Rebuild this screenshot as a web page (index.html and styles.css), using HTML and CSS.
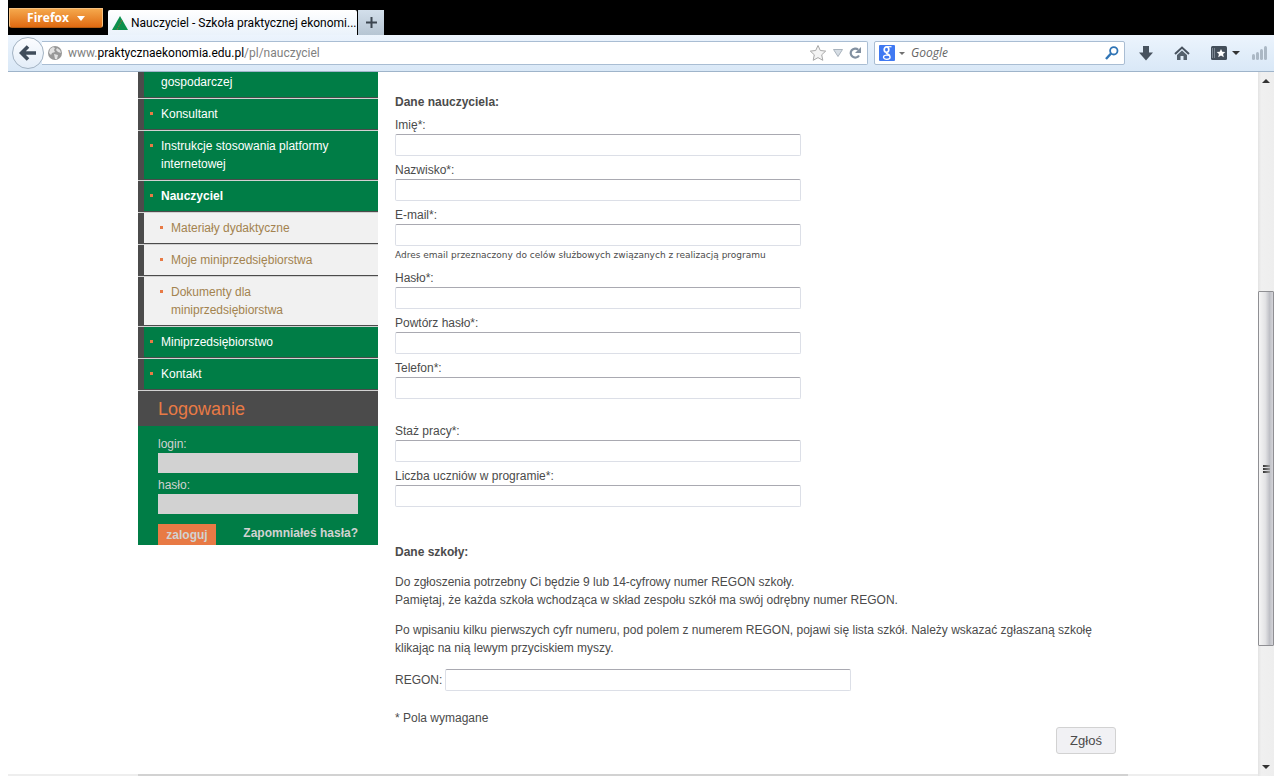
FILE: index.html
```html
<!DOCTYPE html>
<html lang="pl">
<head>
<meta charset="utf-8">
<title>Nauczyciel - Szkoła praktycznej ekonomii</title>
<link rel="stylesheet" href="styles.css">
</head>
<body>
<div class="window">
  <header class="titlebar">
    <button class="firefox" type="button">Firefox <span class="caret-white"></span></button>
    <div class="tab">
      <svg class="tab-icon" viewBox="0 0 16 14" aria-hidden="true"><path d="M8 0l8 14H0z" fill="#0b8f4c"/><path d="M10 4L5 14" stroke="#8a6a3c" stroke-width="1" stroke-dasharray="2 1"/></svg>
      <span class="tab-title">Nauczyciel - Szkoła praktycznej ekonomi...</span>
    </div>
    <button class="new-tab" type="button" aria-label="Nowa karta"><svg viewBox="0 0 11 11" width="11" height="11"><path d="M5.500 0v11M0 5.500h11" stroke="#3c4650" stroke-width="2"/></svg></button>
  </header>
  <div class="toolbar">
    <button class="back" type="button" aria-label="Wstecz"><svg viewBox="0 0 18 16" width="18" height="16"><path d="M9 1.500L2.500 8L9 14.500M3 8h14" fill="none" stroke="#3f4c5a" stroke-width="3.600"/></svg></button>
    <div class="address">
      <svg viewBox="0 0 14 14" width="14" height="14" aria-hidden="true"><circle cx="7" cy="7" r="7" fill="#989898"/><path d="M2 3l3-2 2 1-1 2 1 2-3 1-1 2-2-2zM9 2l3 2 1 3-3-1-2-2zM6 8l4 1-1 4-2 0z" fill="#e2e2e2"/></svg>
      <div class="url">www.<b>praktycznaekonomia.edu.pl</b>/pl/nauczyciel</div>
      <svg viewBox="0 0 18 18" width="18" height="18" aria-hidden="true"><path d="M9 1.500l2.300 5 5.400.6-4 3.700 1.100 5.500L9 13.600l-4.800 2.700 1.100-5.500-4-3.700 5.400-.6z" fill="#f4f4f4" stroke="#a8a8a8"/></svg>
      <svg viewBox="0 0 10 8" width="10" height="8" aria-hidden="true"><path d="M.5.5h9L5 7.500z" fill="#d6dde4" stroke="#a9b3bd"/></svg>
      <svg viewBox="0 0 12 12" width="12" height="12" aria-hidden="true"><path d="M9.200 2.700A4.500 4.500 0 1 0 10 8.500" fill="none" stroke="#8290a0" stroke-width="2.200"/><path d="M12 0v6H6z" fill="#8290a0"/></svg>
    </div>
    <div class="search">
      <svg viewBox="0 0 16 16" width="16" height="16" aria-hidden="true"><rect width="16" height="16" rx="1" fill="#4079f2"/><g fill="none" stroke="#fff"><ellipse cx="7.500" cy="4.600" rx="2.300" ry="2.700" stroke-width="1.700"/><path d="M8 7.500c-2 1.200 2 1.400 2.800 3.200" stroke-width="1.600"/><ellipse cx="7.800" cy="12.300" rx="3.300" ry="2.100" stroke-width="1.300"/><path d="M8 1.700h4.500" stroke-width="1.200"/></g></svg>
      <span class="caret-gray"></span>
      <input class="search-input" type="text" placeholder="Google" aria-label="Szukaj">
      <svg viewBox="0 0 14 14" width="14" height="14" aria-hidden="true"><circle cx="8.800" cy="4.800" r="3.700" fill="none" stroke="#2f74b5" stroke-width="1.800"/><path d="M6 7.500L1 13" stroke="#2f74b5" stroke-width="2.400"/></svg>
    </div>
    <div class="tools">
      <svg viewBox="0 0 14 15" width="14" height="15" aria-hidden="true"><path d="M4 0h6v6.500h4L7 14.500 0 6.500h4z" fill="#48535f"/></svg>
      <svg viewBox="0 0 16 14" width="16" height="14" aria-hidden="true"><path d="M1 8l7-6.500L15 8" fill="none" stroke="#48535f" stroke-width="2"/><path d="M3 9l5-4.500L13 9v5H9.500v-4h-3v4H3z" fill="#55616d"/></svg>
      <span class="bookmarks">
        <svg viewBox="0 0 16 14" width="16" height="14" aria-hidden="true"><rect width="16" height="14" rx="1.500" fill="#434e5a"/><path d="M1.500 2v10M3.500 2v10" stroke="#7c8792"/><path d="M10 3l1.300 2.800 3 .3-2.200 2 .7 3.100L10 9.600l-2.800 1.600.7-3.100-2.200-2 3-.3z" fill="#fff"/></svg>
        <span class="caret-dark"></span>
      </span>
      <svg viewBox="0 0 15 14" width="15" height="14" aria-hidden="true"><g fill="#abb8c5"><rect y="8" width="3" height="6" rx="1.500"/><rect x="4" y="6" width="3" height="8" rx="1.500"/><rect x="8" y="3" width="3" height="11" rx="1.500"/><rect x="12" width="3" height="14" rx="1.500"/></g></svg>
    </div>
  </div>
  <div class="viewport">
    <div class="page">
      <div class="container">
        <aside class="sidebar">
          <nav>
            <ul class="menu">
              <li class="menu-item continued"><a href="#">gospodarczej</a></li>
              <li class="menu-item"><a href="#">Konsultant</a></li>
              <li class="menu-item"><a href="#">Instrukcje stosowania platformy internetowej</a></li>
              <li class="menu-item active"><a href="#">Nauczyciel</a></li>
              <li class="menu-item sub"><a href="#">Materiały dydaktyczne</a></li>
              <li class="menu-item sub"><a href="#">Moje miniprzedsiębiorstwa</a></li>
              <li class="menu-item sub"><a href="#">Dokumenty dla miniprzedsiębiorstwa</a></li>
              <li class="menu-item"><a href="#">Miniprzedsiębiorstwo</a></li>
              <li class="menu-item"><a href="#">Kontakt</a></li>
            </ul>
          </nav>
          <h2 class="login-title">Logowanie</h2>
          <form class="login">
            <label for="login">login:</label>
            <input id="login" type="text">
            <label for="pass">hasło:</label>
            <input id="pass" type="password">
            <div class="login-actions">
              <button type="button">zaloguj</button>
              <a href="#">Zapomniałeś hasła?</a>
            </div>
          </form>
        </aside>
        <main class="content">
          <form>
            <h3 class="heading">Dane nauczyciela:</h3>
            <div class="fields">
              <div class="field"><label for="imie">Imię*:</label><input id="imie" type="text"></div>
              <div class="field"><label for="nazwisko">Nazwisko*:</label><input id="nazwisko" type="text"></div>
              <div class="field"><label for="email">E-mail*:</label><input id="email" type="text"><small class="hint">Adres email przeznaczony do celów służbowych związanych z realizacją programu</small></div>
              <div class="field"><label for="haslo">Hasło*:</label><input id="haslo" type="password"></div>
              <div class="field"><label for="haslo2">Powtórz hasło*:</label><input id="haslo2" type="password"></div>
              <div class="field"><label for="telefon">Telefon*:</label><input id="telefon" type="text"></div>
              <div class="field spaced"><label for="staz">Staż pracy*:</label><input id="staz" type="text"></div>
              <div class="field"><label for="liczba">Liczba uczniów w programie*:</label><input id="liczba" type="text"></div>
            </div>
            <h3 class="heading school">Dane szkoły:</h3>
            <p>Do zgłoszenia potrzebny Ci będzie 9 lub 14-cyfrowy numer REGON szkoły.<br>Pamiętaj, że każda szkoła wchodząca w skład zespołu szkół ma swój odrębny numer REGON.</p>
            <p>Po wpisaniu kilku pierwszych cyfr numeru, pod polem z numerem REGON, pojawi się lista szkół. Należy wskazać zgłaszaną szkołę klikając na nią lewym przyciskiem myszy.</p>
            <div class="regon"><label for="regon">REGON:</label><input id="regon" type="text"></div>
            <div class="required">* Pola wymagane</div>
            <div class="submit-row"><button class="submit" type="button">Zgłoś</button></div>
          </form>
        </main>
      </div>
      <footer class="footer"><div class="footer-line"></div></footer>
    </div>
    <div class="scrollbar" aria-hidden="true">
      <span class="arrow up"></span>
      <div class="track">
        <div class="before"></div>
        <div class="thumb"><i></i><i></i><i></i></div>
        <div class="after"></div>
      </div>
      <span class="arrow down"></span>
    </div>
  </div>
</div>
</body>
</html>
```

FILE: styles.css
```css
* { box-sizing: border-box; }
body { margin: 0; background: #fff; color: #4b4b4b; font: 12px/18px "Liberation Sans", Arial, sans-serif; }
button, input { font: inherit; color: inherit; margin: 0; }
a { color: inherit; text-decoration: none; }
svg { display: block; flex: none; }

.window { margin: 0 8px; }

/* browser chrome */
.titlebar { display: flex; align-items: flex-end; height: 35px; background: #000; font-family: "Open Sans", "Noto Sans", sans-serif; }
.firefox { align-self: flex-start; display: flex; align-items: center; justify-content: center; gap: 8px; width: 94px; height: 20px; margin: 8px 5px 0 1px; padding: 0; border: 1px solid #f6c180; border-bottom-color: #b45a10; border-radius: 0 0 3px 3px; background: linear-gradient(#f5a84c, #df6a12); color: #fff; font-weight: 700; line-height: 16px; }
.caret-white { border: 4px solid transparent; border-top: 5px solid #fff; border-bottom: 0; }
.tab { display: flex; align-items: center; gap: 3px; width: 249px; height: 25px; padding-left: 4px; background: linear-gradient(#fff, #eaf2fb); color: #000; border-radius: 2px 2px 0 0; }
.tab-icon { width: 16px; height: 14px; }
.tab-title { font-family: Roboto, sans-serif; white-space: nowrap; }
.new-tab { display: flex; align-items: center; justify-content: center; width: 26px; height: 25px; margin-left: 1px; padding: 0; border: 0; background: linear-gradient(#d3dfeb, #b6c5d3); }

.toolbar { display: flex; align-items: center; height: 37px; padding: 0 8px 0 4px; background: linear-gradient(#ecf4fd, #d9e8f7); border-bottom: 1px solid #9fb4ca; font-family: "Open Sans", "Noto Sans", sans-serif; }
.back { z-index: 1; display: flex; align-items: center; justify-content: center; width: 32px; height: 32px; padding: 0; border: 1px solid #a3b3c3; border-radius: 50%; background: linear-gradient(#fcfdff, #e3edf8); }
.address { display: flex; align-items: center; gap: 6px; flex: 1; height: 24px; margin-left: -2px; padding: 0 6px; border: 1px solid #a9bdd3; border-left: 0; border-radius: 0 2px 2px 0; background: #fff; }
.url { flex: 1; color: #808080; font-family: Roboto, sans-serif; white-space: nowrap; }
.url b { color: #000; font-weight: 400; }
.search { display: flex; align-items: center; gap: 4px; width: 251px; height: 24px; margin-left: 6px; padding: 0 5px 0 4px; border: 1px solid #a9bdd3; border-radius: 2px; background: #fff; }
.caret-gray { border: 3px solid transparent; border-top-color: #707070; border-bottom: 0; }
.search-input { flex: 1; min-width: 0; padding: 0 2px; border: 0; background: none; outline: 0; }
.search-input::placeholder { color: #666; font-style: italic; opacity: 1; }
.tools { display: flex; align-items: center; gap: 21px; margin-left: 14px; margin-right: -1px; }
.bookmarks { display: flex; align-items: center; gap: 5px; margin-right: -9px; }
.caret-dark { border: 4px solid transparent; border-top-color: #333; border-bottom: 0; }

.viewport { display: flex; }
.page { flex: 1; min-width: 0; }
.container { display: flex; align-items: flex-start; max-width: 990px; margin: 0 auto; padding-bottom: 20px; }

/* sidebar */
.sidebar { width: 240px; flex: none; background: #007d46; }
.menu { margin: 0; padding: 0; list-style: none; }
.menu-item { border-bottom: 1px solid #d2d2d2; }
.menu-item a { display: block; position: relative; padding: 6px 17px; border-left: 6px solid #4b4b4b; border-bottom: 1px solid #4b4b4b; background: #007d46; color: #fff; }
.menu-item a::before { content: ""; position: absolute; left: 6px; top: 13px; width: 3px; height: 3px; background: #e87a45; }
.continued a { padding-top: 1px; }
.continued a::before { display: none; }
.active { font-weight: 700; }
.sub a { padding-left: 27px; background: #f1f1f1; color: #a3834f; }
.sub a::before { left: 16px; }
.login-title { margin: 0; padding: 1px 20px 0; background: #4b4b4b; color: #e87a45; font-size: 18px; font-weight: 400; line-height: 34px; }
.login { padding: 9px 20px 0; color: #d2d2d2; }
.login label { display: block; }
.login input { display: block; width: 100%; height: 20px; margin-bottom: 3px; padding: 0 4px; border: 0; background: #d2d2d2; color: #4b4b4b; }
.login-actions { display: flex; justify-content: space-between; margin-top: 10px; font-weight: 700; }
.login-actions button { width: 58px; height: 21px; padding: 0; border: 0; background: #e87a45; }

/* registration form */
.content { flex: 1; min-width: 0; padding: 21px 12px 0 17px; }
.heading { margin: 0; font-size: 12px; line-height: 18px; }
.fields { display: grid; gap: 5px; margin-top: 5px; }
.field label { display: block; }
.field input, .regon input { display: block; width: 406px; height: 22px; padding: 0 4px; border: 1px solid #dcdfe7; border-top-color: #a9a9b1; border-radius: 2px; background: #fff; }
.hint { display: block; font-family: "DejaVu Sans", Verdana, sans-serif; font-size: 9px; line-height: 18px; }
.spaced { margin-top: 18px; }
.school { margin-top: 36px; }
.content p { margin: 12px 0; }
.regon { display: flex; align-items: center; gap: 3px; }
.required { margin-top: 18px; }
.submit-row { display: flex; justify-content: flex-end; }
.submit { width: 60px; height: 27px; padding: 0; border: 1px solid #d2d2d2; border-radius: 3px; background: #f1f1f4; font-size: 13px; }

.footer { background: #eee; }
.footer-line { max-width: 990px; height: 2px; margin: 0 auto; background: #d2d2d2; }

/* scrollbar */
.scrollbar { display: flex; flex-direction: column; width: 16px; background: linear-gradient(90deg, #e3e3e3, #f0f0f0 20%, #eee); }
.arrow { width: 8px; height: 4px; margin: 7px 4px; border: 4px solid transparent; }
.up { border-top: 0; border-bottom-color: #333; }
.down { border-bottom: 0; border-top-color: #333; }
.track { display: flex; flex-direction: column; flex: 1; }
.before { flex: 202; }
.after { flex: 112; }
.thumb { flex: 354; display: flex; flex-direction: column; align-items: center; justify-content: center; gap: 1px; border: 1px solid #8f8f93; border-radius: 1px; background: linear-gradient(90deg, #f5f5f5, #e3e3e5 45%, #bfc0c6 75%, #d3d3d8); }
.thumb i { width: 7px; height: 2px; background: linear-gradient(90deg, #333, #999); }
```
